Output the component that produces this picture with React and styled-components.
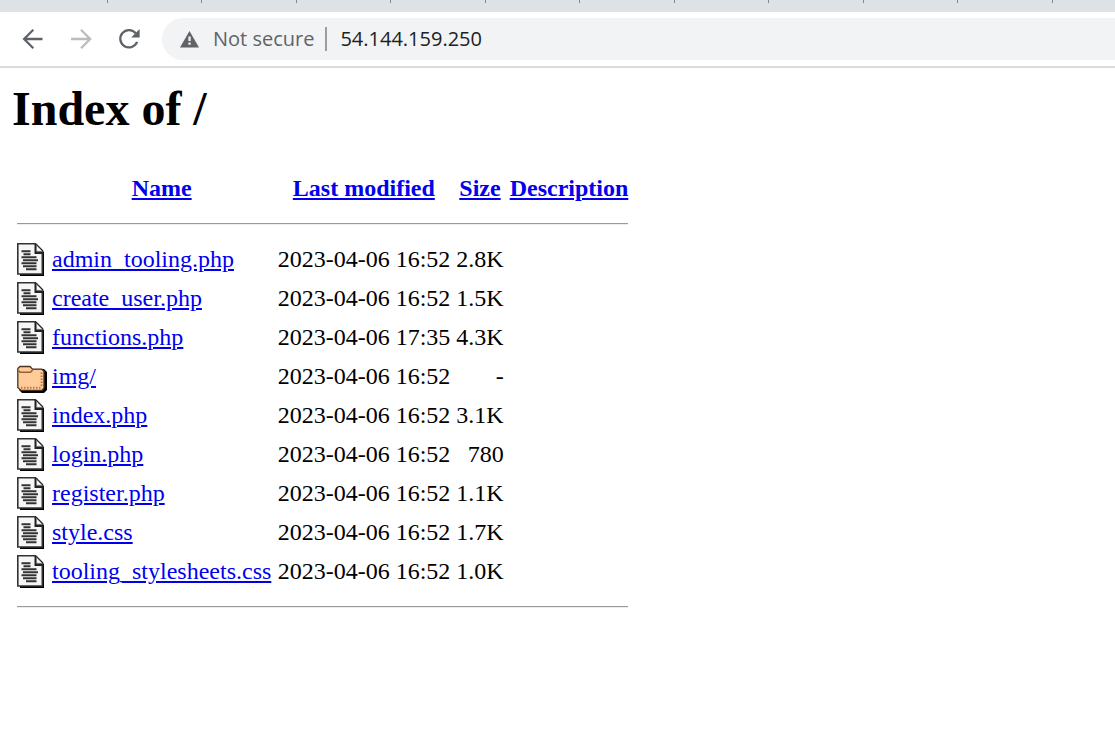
import React from 'react';
import styled, { createGlobalStyle } from 'styled-components';

const GlobalStyle = createGlobalStyle`
  * { box-sizing: border-box; }
  body { margin: 0; background: #fff; color: #000; }
`;

const TabStrip = styled.div`
  display: flex;
  height: 12px;
  padding-left: 14px;
  background: #dee1e6;
  overflow: hidden;
`;

const TabSlot = styled.div`
  flex: none;
  width: 94px;
  height: 3px;
  border-right: 1px solid #85888c;
  &:nth-child(odd) { width: 95px; }
  &:first-child { width: 94px; }
`;

const Toolbar = styled.nav`
  display: flex;
  align-items: center;
  height: 56px;
  padding-left: 18px;
  border-bottom: 2px solid #dadbdc;
`;

const NavButton = styled.button`
  display: flex;
  flex: none;
  width: 30px;
  height: 30px;
  margin-right: 18px;
  padding: 0;
  border: 0;
  background: none;
  color: ${(p) => (p.disabled ? '#babcbe' : '#5f6368')};
`;

const AddressBar = styled.div`
  display: flex;
  flex: 1;
  align-items: center;
  height: 42px;
  padding-left: 16px;
  border-radius: 21px 0 0 21px;
  background: #f1f3f4;
`;

const SecurityChip = styled.button`
  display: flex;
  align-items: center;
  gap: 12px;
  height: 24px;
  padding: 0 11px 0 0;
  border: 0;
  border-right: 2px solid #9a9da1;
  background: none;
  color: #5f6368;
  font: 20px/24px 'Open Sans', sans-serif;
  white-space: nowrap;
`;

const AddressInput = styled.input`
  flex: 1;
  min-width: 0;
  padding: 0 0 0 13px;
  border: 0;
  outline: 0;
  background: none;
  color: #202124;
  font: 20px/24px 'Open Sans', sans-serif;
`;

const Page = styled.main`
  padding: 13px 12px;
  font-family: 'Liberation Serif', serif;
`;

const Heading = styled.h1`
  margin: 0 0 32px;
  font-size: 48px;
  line-height: 56px;
`;

const Listing = styled.table`
  margin-left: 2px;
  border-collapse: collapse;
  font-size: 24px;
  line-height: 27px;
  white-space: nowrap;
`;

const Column = styled.col`
  width: ${(p) => p.$width}px;
`;

const Row = styled.tr`
  height: 39px;
`;

const HeadCell = styled.th`
  padding: 0 3px;
`;

const Cell = styled.td`
  padding: 0 3px;
  text-align: ${(p) => p.$align || 'left'};
`;

const IconCell = styled.td`
  padding: 3px 2px 3px 3px;
  svg { display: block; }
`;

const RuleCell = styled.td`
  padding: 15px 3px;
`;

const Rule = styled.hr`
  height: 2px;
  margin: 0;
  border: 0;
  border-top: 1px solid #9a9a9a;
  border-bottom: 1px solid #eee;
`;

const Link = styled.a`
  color: #0000ee;
`;

const files = [
  ['admin_tooling.php', '2023-04-06 16:52', '2.8K'],
  ['create_user.php', '2023-04-06 16:52', '1.5K'],
  ['functions.php', '2023-04-06 17:35', '4.3K'],
  ['img/', '2023-04-06 16:52', '-'],
  ['index.php', '2023-04-06 16:52', '3.1K'],
  ['login.php', '2023-04-06 16:52', '780'],
  ['register.php', '2023-04-06 16:52', '1.1K'],
  ['style.css', '2023-04-06 16:52', '1.7K'],
  ['tooling_stylesheets.css', '2023-04-06 16:52', '1.0K'],
];

const ArrowIcon = ({ forward }) => (
  <svg width="30" height="30" viewBox="0 0 30 30" fill="none" stroke="currentColor" strokeWidth="2.3" aria-hidden="true">
    <path d={forward ? 'M5 15H24M15 5.8L24.2 15L15 24.2' : 'M24.5 15H6M15.3 5.8L6.1 15L15.3 24.2'} />
  </svg>
);

const ReloadIcon = () => (
  <svg width="30" height="30" viewBox="0 0 30 30" fill="none" aria-hidden="true">
    <path d="M23.1 17.9A8.7 8.7 0 1 1 21.8 9.3" stroke="currentColor" strokeWidth="2.3" />
    <path d="M25.6 5V13.4H17.2Z" fill="currentColor" />
  </svg>
);

const WarningIcon = () => (
  <svg width="23" height="24" viewBox="0 0 23 24" aria-hidden="true">
    <path d="M11.5 4L21 20.5H2Z" fill="#5f6368" />
    <path d="M10.4 9.5H12.7V14H10.4ZM10.4 15.5H12.7V17.8H10.4Z" fill="#f1f3f4" />
  </svg>
);

const DocumentIcon = () => (
  <svg width="30" height="33" viewBox="0 0 30 33" role="img" aria-label="Text file">
    <path d="M3 9H27V33H3Z" fill="#000" />
    <path d="M.8 .8H18.5L25.3 7.6V31H.8Z" fill="#f6f6f6" stroke="#333" strokeWidth="1.6" />
    <path d="M17.5 1H19.5L26.5 8V11H17.5Z" fill="#222" />
    <path d="M19.6 2.4L25.3 8.3H19.6Z" fill="#fff" stroke="#888" strokeWidth=".8" />
    <path
      d="M4.5 8.2H13.5M6.5 11.2H13.5M4.5 14.2H19.5M6 17.2H21M4.5 20.2H19.5M6 23.2H19.5M9 26.2H19.5"
      stroke="#333"
      strokeWidth="2"
    />
  </svg>
);

const FolderIcon = () => (
  <svg width="30" height="33" viewBox="0 0 30 33" role="img" aria-label="Folder">
    <path d="M5 9H27L30 12V30L27 33H5L2 30V12Z" fill="#000" />
    <path d="M.8 10V8.5L3 6.5H13L15.5 9.2H24.8L27 11.4V28L25 30.4H4L.8 27.5Z" fill="#ffcc99" stroke="#49331f" strokeWidth="1.3" />
    <path d="M1.5 10.5L3 12.3H13.5L15.8 9.8" fill="none" stroke="#926339" strokeWidth="1.5" />
    <path d="M4 27.7H24.5M24.6 26V12" fill="none" stroke="#b87942" strokeWidth="2" strokeDasharray="1.5 1.5" />
  </svg>
);

export default function App() {
  return (
    <>
      <GlobalStyle />
      <header>
        <TabStrip>
          {Array.from({ length: 11 }, (_, i) => <TabSlot key={i} />)}
        </TabStrip>
        <Toolbar>
          <NavButton aria-label="Back"><ArrowIcon /></NavButton>
          <NavButton aria-label="Forward" disabled><ArrowIcon forward /></NavButton>
          <NavButton aria-label="Reload"><ReloadIcon /></NavButton>
          <AddressBar>
            <SecurityChip><WarningIcon />Not secure</SecurityChip>
            <AddressInput aria-label="Address" defaultValue="54.144.159.250" spellCheck={false} />
          </AddressBar>
        </Toolbar>
      </header>
      <Page>
        <Heading>Index of /</Heading>
        <Listing>
          <colgroup>
            <Column $width={35} />
            <Column $width={225} />
            <Column $width={179} />
            <Column $width={53} />
            <Column $width={124} />
          </colgroup>
          <thead>
            <Row>
              <td />
              <HeadCell><Link href="#name">Name</Link></HeadCell>
              <HeadCell><Link href="#modified">Last modified</Link></HeadCell>
              <HeadCell><Link href="#size">Size</Link></HeadCell>
              <HeadCell><Link href="#description">Description</Link></HeadCell>
            </Row>
            <tr><RuleCell colSpan={5}><Rule /></RuleCell></tr>
          </thead>
          <tbody>
            {files.map(([name, modified, size]) => (
              <Row key={name}>
                <IconCell>{name.endsWith('/') ? <FolderIcon /> : <DocumentIcon />}</IconCell>
                <Cell><Link href={`#${name}`}>{name}</Link></Cell>
                <Cell $align="right">{modified}</Cell>
                <Cell $align="right">{size}</Cell>
                <Cell />
              </Row>
            ))}
            <tr><RuleCell colSpan={5}><Rule /></RuleCell></tr>
          </tbody>
        </Listing>
      </Page>
    </>
  );
}
